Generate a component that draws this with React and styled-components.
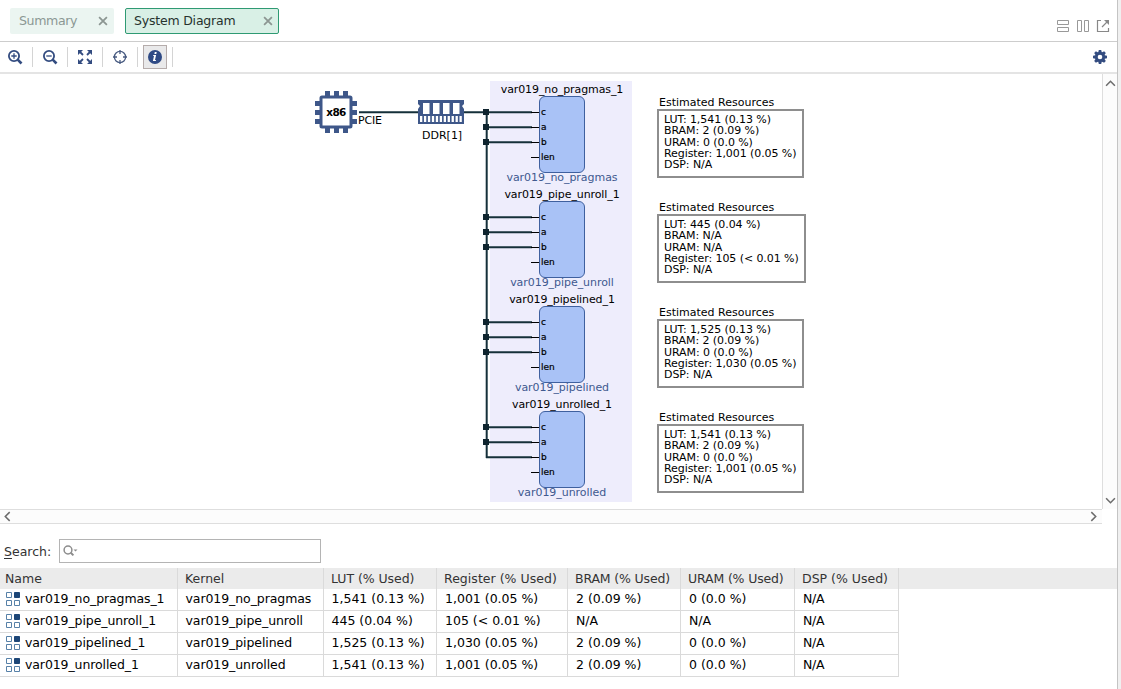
import React from "react";
import styled, { createGlobalStyle, css } from "styled-components";

const GlobalStyle = createGlobalStyle`
  * { box-sizing: border-box; }
  body { margin: 0; background: #fff; overflow: hidden; }
`;

const Window = styled.div`
  display: flex;
  width: 1121px;
  height: 689px;
  background: #f0f0f0;
  font-family: "DejaVu Sans", sans-serif;
  font-size: 12.5px;
  color: #1c1c1c;
  white-space: nowrap;
`;

const Panel = styled.main`
  display: flex;
  flex-direction: column;
  width: 1118px;
  height: 689px;
  background: #fff;
  border-right: 1px solid #c4c4c4;
`;

const TabBar = styled.header`
  display: flex;
  flex: none;
  justify-content: space-between;
  height: 42px;
  padding: 8px 7px 0 10px;
  border-bottom: 1px solid #cdcdcd;
`;

const Tabs = styled.div`
  display: flex;
  gap: 11px;
`;

const Tab = styled.div`
  display: flex;
  align-items: center;
  justify-content: space-between;
  width: ${(p) => (p.$active ? 154 : 104)}px;
  height: 26px;
  padding: 0 ${(p) => (p.$active ? 5 : 6)}px 1px ${(p) => (p.$active ? 8 : 9)}px;
  border-radius: 2px;
  font-size: 12.5px;
  letter-spacing: ${(p) => (p.$active ? -0.2 : -0.35)}px;
  font-size: ${(p) => (p.$active ? 12.5 : 12.6)}px;
  letter-spacing: ${(p) => (p.$active ? -0.2 : -0.4)}px;
  color: ${(p) => (p.$active ? "#26332e" : "#8b9894")};
  background: ${(p) => (p.$active ? "#d9f0e6" : "#ebf5f1")};
  ${(p) => p.$active && css`border: 1px solid #2f9a73;`}
`;

const WindowActions = styled.div`
  display: flex;
  gap: 6px;
  padding-top: 11px;
`;

const Toolbar = styled.div`
  display: flex;
  flex: none;
  justify-content: space-between;
  height: 32px;
  padding: 3px 9px 0 3px;
  border-bottom: 2px solid #e4e4e4;
`;

const Tools = styled.div`
  display: flex;
`;

const ToolSlot = styled.div`
  display: flex;
  width: 35px;
  height: 24px;
`;

const ToolButton = styled.div`
  display: flex;
  align-items: center;
  justify-content: center;
  width: 24px;
  height: 24px;
  margin-right: 5px;
  ${(p) => p.$pressed && css`
    background: #e9e9ea;
    border: 1px solid #b5acab;
  `}
`;

const Divider = styled.span`
  width: 1px;
  height: 20px;
  margin-top: 2px;
  background: #d4d4d4;
`;

const SettingsButton = styled.div`
  padding-top: 4px;
  height: 24px;
`;

const Viewport = styled.div`
  display: flex;
  flex: none;
  height: 435px;
`;

const Canvas = styled.div`
  position: relative;
  width: 1102px;
  height: 435px;
  overflow: hidden;
  font-size: 11px;
  line-height: 12px;
  color: #000;
`;

const VScroll = styled.div`
  display: flex;
  flex-direction: column;
  justify-content: space-between;
  align-items: center;
  width: 15px;
  padding: 4px 0 3px;
  background: #fcfcfc;
  border-left: 1px solid #dedede;
`;

const HScroll = styled.div`
  display: flex;
  flex: none;
  justify-content: space-between;
  align-items: center;
  width: 1102px;
  height: 15px;
  padding: 0 3px 0 2px;
  background: #fcfcfc;
  border: solid #dedede;
  border-width: 1px 0;
`;

const Region = styled.div`
  position: absolute;
  left: 490px;
  top: 7px;
  width: 142px;
  height: 421px;
  background: #eeedfc;
`;

const Wires = styled.svg`
  position: absolute;
  left: 0;
  top: 0;
`;

const Label = styled.div`
  position: absolute;
  left: ${(p) => p.$x}px;
  top: ${(p) => p.$y}px;
  letter-spacing: ${(p) => p.$track || 0}px;
`;

const Kernel = styled.div`
  position: absolute;
  left: 490px;
  top: ${(p) => p.$y}px;
  display: flex;
  flex-direction: column;
  align-items: center;
  width: 144px;
`;

const KernelName = styled.div`
  height: 12px;
  letter-spacing: -0.1px;
`;

const KernelType = styled.div`
  height: 12px;
  margin-top: -1px;
  color: #40598f;
  letter-spacing: -0.05px;
`;

const KernelBody = styled.div`
  width: 46px;
  height: 77px;
  padding: 8px 0 0 1px;
  border: 1px solid #3f609f;
  border-radius: 6px;
  background: #a9c2f6;
`;

const Port = styled.div`
  height: 15px;
  line-height: 14px;
  font-size: 9px;
  -webkit-text-stroke: 0.2px #000;
`;

const Resources = styled.div`
  position: absolute;
  left: 657px;
  top: ${(p) => p.$y}px;
`;

const ResourcesTitle = styled.div`
  height: 12px;
  padding-left: 2px;
`;

const ResourcesBox = styled.div`
  width: ${(p) => p.$w}px;
  height: 69px;
  padding: 3px 0 0 5px;
  border: 2px solid #8e8e8e;
  line-height: 11.3px;
  letter-spacing: -0.08px;
`;

const SearchRow = styled.div`
  display: flex;
  flex: none;
  align-items: center;
  gap: 8px;
  height: 44px;
  padding: 10px 0 0 4px;
  color: #333;
`;

const SearchLabel = styled.label`
  width: 47px;
  u { text-underline-offset: 2px; }
`;

const SearchField = styled.div`
  display: flex;
  align-items: center;
  width: 262px;
  height: 24px;
  padding-left: 3px;
  border: 1px solid #b4b4b4;
`;

const Row = styled.div`
  display: grid;
  flex: none;
  grid-template-columns: 178px 146px 113px 131px 113px 114px 104px;
  height: ${(p) => (p.$head ? 21 : 22)}px;
  background: ${(p) => (p.$head ? "#ebebeb" : "#fff")};
  color: ${(p) => (p.$head ? "#333" : "#000")};
`;

const Cell = styled.div`
  display: flex;
  align-items: center;
  padding-left: ${(p) => p.$pad}px;
  padding-bottom: ${(p) => (p.$head ? 0 : 2)}px;
  border-right: 1px solid #dadada;
  border-bottom: ${(p) => (p.$head ? "none" : "1px solid #dadada")};
  letter-spacing: ${(p) => p.$track || 0}px;
  svg { flex: none; margin: 2px 4px 0 0; }
`;

const CloseIcon = () => (
  <svg width="10" height="10" viewBox="0 0 9 9"><path d="M1 1l7 7M8 1l-7 7" stroke="#8c9692" strokeWidth="1.6" /></svg>
);

const Magnifier = ({ plus }) => (
  <svg width="16" height="16" viewBox="0 0 16 16" fill="none" stroke="#334c80">
    <circle cx="7" cy="7" r="5.1" strokeWidth="1.8" />
    <path d="M10.7 10.7l3.8 3.8" strokeWidth="2.6" />
    <path d={plus ? "M4.3 7h5.4M7 4.3v5.4" : "M4.3 7h5.4"} strokeWidth="1.3" />
  </svg>
);

const FitIcon = () => (
  <svg width="16" height="16" viewBox="0 0 16 16">
    <g fill="#334c80">
      <path d="M1 1h5L1 6zM15 1v5l-5-5zM1 15v-5l5 5zM15 15h-5l5-5z" />
    </g>
    <path d="M2 2l4 4M14 2l-4 4M2 14l4-4M14 14l-4-4" stroke="#334c80" strokeWidth="1.8" />
  </svg>
);

const TargetIcon = () => (
  <svg width="16" height="16" viewBox="0 0 16 16" fill="none" stroke="#475a80">
    <circle cx="8" cy="8" r="5.6" strokeWidth="1.3" />
    <path d="M8 1v4M8 11V15M1 8h4M11 8H15" strokeWidth="1.3" />
  </svg>
);

const InfoIcon = () => (
  <svg width="16" height="16" viewBox="0 0 16 16">
    <circle cx="8" cy="8" r="7" fill="#2f4a85" />
    <path d="M9.7 3.1l-.4 1.9H7.4l.4-1.9zM6.3 6h2.8L8 11h1l-.2 1.1H5.9L7 7.1h-.9z" fill="#fff" />
  </svg>
);

const GearIcon = () => (
  <svg width="16" height="16" viewBox="-8 -8 16 16">
    <g fill="#334c80">
      {[0, 45, 90, 135].map((a) => (
        <path key={a} d="M-1.8-4.5L-1.2-7H1.2L1.8-4.5V4.5L1.2 7H-1.2L-1.8 4.5z" transform={`rotate(${a})`} />
      ))}
      <circle r="5" />
    </g>
    <circle r="2.3" fill="#fff" />
  </svg>
);

const SplitRows = () => (
  <svg width="14" height="14" viewBox="0 0 14 14" fill="none" stroke="#999"><path d="M1.5 1.5h11v4h-11zM1.5 8.5h11v4h-11z" /></svg>
);
const SplitColumns = () => (
  <svg width="14" height="14" viewBox="0 0 14 14" fill="none" stroke="#999"><path d="M1.5 1.5h4v11h-4zM8.5 1.5h4v11h-4z" /></svg>
);
const PopOut = () => (
  <svg width="14" height="14" viewBox="0 0 14 14" fill="none" stroke="#888">
    <path d="M5 1.5H1.5v11h11V9M6 8l5-5" strokeWidth="1.2" />
    <path d="M8 1h5v5z" fill="#888" stroke="none" />
  </svg>
);

const CHEVRONS = {
  up: "M1 7l4-4 4 4",
  down: "M1 3l4 4 4-4",
  left: "M7 1L3 5l4 4",
  right: "M3 1l4 4-4 4",
};
const Chevron = ({ to }) => (
  <svg width="11" height="11" viewBox="0 0 10 10" fill="none" stroke="#6c6c6c" strokeWidth="1.4"><path d={CHEVRONS[to]} /></svg>
);

const SearchIcon = () => (
  <svg width="16" height="14" viewBox="0 0 16 14" fill="none" stroke="#8c8c8c">
    <circle cx="5" cy="6" r="3.9" strokeWidth="1.5" />
    <path d="M7.8 8.8l2.6 2.6" strokeWidth="2" />
    <path d="M10.5 5.5h4l-2 2z" fill="#8c8c8c" stroke="none" />
  </svg>
);

const KernelIcon = () => (
  <svg width="15" height="15" viewBox="0 0 15 15" fill="none" stroke="#5781a8">
    <path d="M.5.5h5v5h-5zM.5 8.5h5v5h-5zM8.5 8.5h5v5h-5z" />
    <path d="M8.5.5h5v5h-5z" fill="#1d4677" stroke="#1d4677" />
  </svg>
);

const COLUMNS = ["Name", "Kernel", "LUT (% Used)", "Register (% Used)", "BRAM (% Used)", "URAM (% Used)", "DSP (% Used)"];
const HEAD_PAD = [5, 7, 7, 7, 7, 7, 7];
const HEAD_TRACK = [0, 0, -0.05, 0.03, -0.15, -0.15, 0];

const KERNELS = [
  { name: "var019_no_pragmas", lut: "1,541 (0.13 %)", reg: "1,001 (0.05 %)", bram: "2 (0.09 %)", uram: "0 (0.0 %)", dsp: "N/A", box: 147 },
  { name: "var019_pipe_unroll", lut: "445 (0.04 %)", reg: "105 (< 0.01 %)", bram: "N/A", uram: "N/A", dsp: "N/A", box: 149 },
  { name: "var019_pipelined", lut: "1,525 (0.13 %)", reg: "1,030 (0.05 %)", bram: "2 (0.09 %)", uram: "0 (0.0 %)", dsp: "N/A", box: 147 },
  { name: "var019_unrolled", lut: "1,541 (0.13 %)", reg: "1,001 (0.05 %)", bram: "2 (0.09 %)", uram: "0 (0.0 %)", dsp: "N/A", box: 147 },
];

const CpuShape = () => (
  <g transform="translate(315 17)">
    {[10, 19, 28].map((p) => (
      <g key={p} fill="#3e5789">
        <rect x={p} y="0" width="5" height="42" />
        <rect x="0" y={p} width="42" height="5" />
      </g>
    ))}
    <rect x="6" y="6" width="30" height="30" rx="1" fill="#fff" stroke="#3e5789" strokeWidth="3" />
    <text x="21" y="25" textAnchor="middle" fontSize="10.5" fontWeight="bold" letterSpacing="-0.6">x86</text>
  </g>
);

const MemoryShape = () => (
  <g transform="translate(418 26)">
    <path d="M0 0h46v4l-2 2 2 3v15H0V9l2-3-2-2z" fill="#3e5789" />
    {[5, 15, 25, 35].map((x) => <rect key={x} x={x} y="3" width="6.5" height="11" fill="#fff" />)}
    {Array.from({ length: 11 }, (_, i) => <rect key={i} x={2 + i * 3.95} y="16" width="2.3" height="6" fill="#fff" />)}
  </g>
);

const Connections = () => (
  <Wires width="1102" height="435">
    <g stroke="#15303a" strokeWidth="2" fill="none">
      <path d="M359 38.3H418M463 38.3H486" />
      <path d="M486.7 38V384" />
      {KERNELS.map((k, i) => [38.3, 53.3, 68.3].map((y) => (
        <g key={k.name + y}>
          <path d={`M486 ${y + i * 105}H532`} />
          {!(i === 3 && y === 68.3) && (
            <rect x="483" y={y - 3.3 + i * 105} width="6" height="6" fill="#10252f" stroke="none" />
          )}
        </g>
      )))}
      {KERNELS.map((k, i) => [38.5, 53.5, 68.5, 83.5].map((y) => (
        <path key={k.name + y} d={`M531 ${y + i * 105}H540`} strokeWidth="1" stroke="#000" />
      )))}
    </g>
    <CpuShape />
    <MemoryShape />
  </Wires>
);

export default function App() {
  return (
    <Window>
      <GlobalStyle />
      <Panel>
        <TabBar>
          <Tabs>
            <Tab>Summary<CloseIcon /></Tab>
            <Tab $active>System Diagram<CloseIcon /></Tab>
          </Tabs>
          <WindowActions><SplitRows /><SplitColumns /><PopOut /></WindowActions>
        </TabBar>
        <Toolbar>
          <Tools>
            <ToolSlot><ToolButton><Magnifier plus /></ToolButton><Divider /></ToolSlot>
            <ToolSlot><ToolButton><Magnifier /></ToolButton><Divider /></ToolSlot>
            <ToolSlot><ToolButton><FitIcon /></ToolButton><Divider /></ToolSlot>
            <ToolSlot><ToolButton><TargetIcon /></ToolButton><Divider /></ToolSlot>
            <ToolSlot><ToolButton $pressed><InfoIcon /></ToolButton><Divider /></ToolSlot>
          </Tools>
          <SettingsButton><GearIcon /></SettingsButton>
        </Toolbar>
        <Viewport>
          <Canvas>
            <Region />
            <Connections />
            <Label $x={358} $y={41} $track={-0.2}>PCIE</Label>
            <Label $x={422} $y={56}>DDR[1]</Label>
            {KERNELS.map((k, i) => (
              <Kernel key={k.name} $y={10 + i * 105}>
                <KernelName>{k.name}_1</KernelName>
                <KernelBody>
                  <Port>c</Port><Port>a</Port><Port>b</Port><Port>len</Port>
                </KernelBody>
                <KernelType>{k.name}</KernelType>
              </Kernel>
            ))}
            {KERNELS.map((k, i) => (
              <Resources key={k.name} $y={23 + i * 105}>
                <ResourcesTitle>Estimated Resources</ResourcesTitle>
                <ResourcesBox $w={k.box}>
                  <div>LUT: {k.lut}</div>
                  <div>BRAM: {k.bram}</div>
                  <div>URAM: {k.uram}</div>
                  <div>Register: {k.reg}</div>
                  <div>DSP: {k.dsp}</div>
                </ResourcesBox>
              </Resources>
            ))}
          </Canvas>
          <VScroll><Chevron to="up" /><Chevron to="down" /></VScroll>
        </Viewport>
        <HScroll><Chevron to="left" /><Chevron to="right" /></HScroll>
        <SearchRow>
          <SearchLabel><u>S</u>earch:</SearchLabel>
          <SearchField><SearchIcon /></SearchField>
        </SearchRow>
        <Row $head>
          {COLUMNS.map((c, i) => <Cell key={c} $head $pad={HEAD_PAD[i]} $track={HEAD_TRACK[i]}>{c}</Cell>)}
        </Row>
        {KERNELS.map((k) => (
          <Row key={k.name}>
            <Cell $pad={6} $track={-0.1}><KernelIcon />{k.name}_1</Cell>
            <Cell $pad={7.5} $track={-0.08}>{k.name}</Cell>
            <Cell $pad={7.5}>{k.lut}</Cell>
            <Cell $pad={8}>{k.reg}</Cell>
            <Cell $pad={8}>{k.bram}</Cell>
            <Cell $pad={8}>{k.uram}</Cell>
            <Cell $pad={8} $track={-0.3}>{k.dsp}</Cell>
          </Row>
        ))}
      </Panel>
    </Window>
  );
}
